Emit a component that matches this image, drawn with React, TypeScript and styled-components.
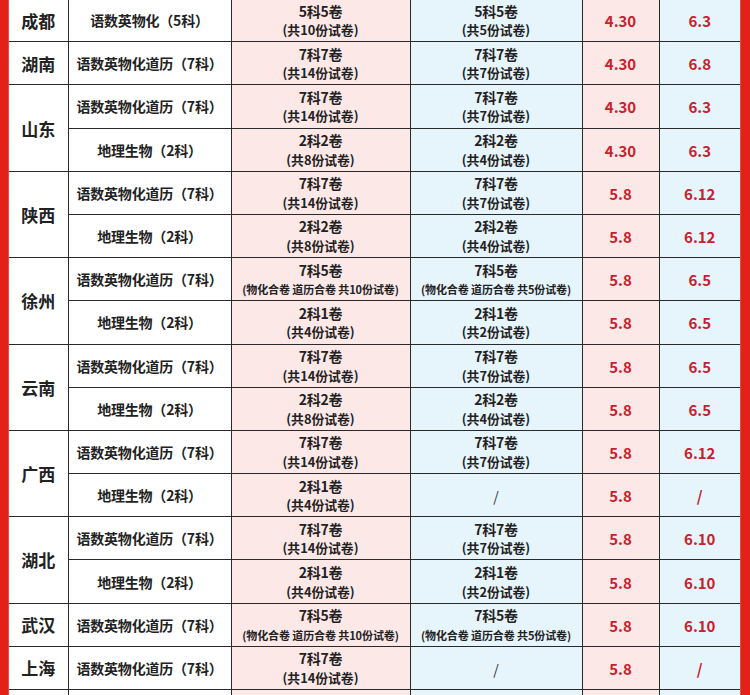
import React from "react";
import styled, { createGlobalStyle } from "styled-components";

const Global = createGlobalStyle`
  html, body { margin: 0; padding: 0; background: #ffffff; overflow: hidden; }
  body { font-family: "Noto Sans CJK SC", "Noto Sans", sans-serif; }
`;

const Frame = styled.div`
  width: 750px;
  height: 695px;
  overflow: hidden;
  box-sizing: border-box;
  background: #e32119;
  padding: 0 10px 0 9px;
  display: flex;
  flex-direction: column;
`;

const Table = styled.table`
  width: 731px;
  table-layout: fixed;
  border-collapse: collapse;
  margin-top: -2px;
  background: #ffffff;
  box-shadow: -1px 0 0 #f04a40, 1px 0 0 #f04a40;
`;

const Row = styled.tr`
  height: 43.2px;
`;

type Tone = "white" | "pink" | "blue";
const bg: Record<Tone, string> = {
  white: "#ffffff",
  pink: "#fde8e8",
  blue: "#e6f4fc",
};

const Cell = styled.td<{ $tone?: Tone }>`
  border: 1.8px solid #2a2a2a;
  padding: 0;
  text-align: center;
  vertical-align: middle;
  background: ${(p) => bg[p.$tone || "white"]};
  color: #222;
  font-weight: 700;
  &:first-child { border-left: none; }
  &:last-child { border-right: none; }
`;

const City = styled.span`
  font-size: 17px;
  display: block;
`;

const Subject = styled.span`
  font-size: 14px;
  display: block;
  letter-spacing: -0.2px;
`;

const Main = styled.div`
  font-size: 14px;
  line-height: 20.6px;
  letter-spacing: -0.2px;
`;

const Sub = styled.div<{ $small?: boolean }>`
  font-size: ${(p) => (p.$small ? "11px" : "12.8px")};
  line-height: 18.6px;
  letter-spacing: ${(p) => (p.$small ? "-0.1px" : "0px")};
`;

const Num = styled.span`
  font-size: 15px;
  color: #c8202c;
  font-weight: 700;
`;

const Slash = styled.span`
  font-size: 14px;
  font-weight: 400;
  color: #333;
`;

type Paper = { main: string; sub: string; small?: boolean } | null;

type Line = {
  city?: string;
  span?: number;
  subject: string;
  a: Paper;
  b: Paper;
  d1: string;
  d2: string;
};

const S7 = "语数英物化道历（7科）";
const S2 = "地理生物（2科）";

const lines: Line[] = [
  { city: "成都", subject: "语数英物化（5科）", a: { main: "5科5卷", sub: "(共10份试卷)" }, b: { main: "5科5卷", sub: "(共5份试卷)" }, d1: "4.30", d2: "6.3" },
  { city: "湖南", subject: S7, a: { main: "7科7卷", sub: "(共14份试卷)" }, b: { main: "7科7卷", sub: "(共7份试卷)" }, d1: "4.30", d2: "6.8" },
  { city: "山东", span: 2, subject: S7, a: { main: "7科7卷", sub: "(共14份试卷)" }, b: { main: "7科7卷", sub: "(共7份试卷)" }, d1: "4.30", d2: "6.3" },
  { subject: S2, a: { main: "2科2卷", sub: "(共8份试卷)" }, b: { main: "2科2卷", sub: "(共4份试卷)" }, d1: "4.30", d2: "6.3" },
  { city: "陕西", span: 2, subject: S7, a: { main: "7科7卷", sub: "(共14份试卷)" }, b: { main: "7科7卷", sub: "(共7份试卷)" }, d1: "5.8", d2: "6.12" },
  { subject: S2, a: { main: "2科2卷", sub: "(共8份试卷)" }, b: { main: "2科2卷", sub: "(共4份试卷)" }, d1: "5.8", d2: "6.12" },
  { city: "徐州", span: 2, subject: S7, a: { main: "7科5卷", sub: "(物化合卷 道历合卷 共10份试卷)", small: true }, b: { main: "7科5卷", sub: "(物化合卷 道历合卷 共5份试卷)", small: true }, d1: "5.8", d2: "6.5" },
  { subject: S2, a: { main: "2科1卷", sub: "(共4份试卷)" }, b: { main: "2科1卷", sub: "(共2份试卷)" }, d1: "5.8", d2: "6.5" },
  { city: "云南", span: 2, subject: S7, a: { main: "7科7卷", sub: "(共14份试卷)" }, b: { main: "7科7卷", sub: "(共7份试卷)" }, d1: "5.8", d2: "6.5" },
  { subject: S2, a: { main: "2科2卷", sub: "(共8份试卷)" }, b: { main: "2科2卷", sub: "(共4份试卷)" }, d1: "5.8", d2: "6.5" },
  { city: "广西", span: 2, subject: S7, a: { main: "7科7卷", sub: "(共14份试卷)" }, b: { main: "7科7卷", sub: "(共7份试卷)" }, d1: "5.8", d2: "6.12" },
  { subject: S2, a: { main: "2科1卷", sub: "(共4份试卷)" }, b: null, d1: "5.8", d2: "/" },
  { city: "湖北", span: 2, subject: S7, a: { main: "7科7卷", sub: "(共14份试卷)" }, b: { main: "7科7卷", sub: "(共7份试卷)" }, d1: "5.8", d2: "6.10" },
  { subject: S2, a: { main: "2科1卷", sub: "(共4份试卷)" }, b: { main: "2科1卷", sub: "(共2份试卷)" }, d1: "5.8", d2: "6.10" },
  { city: "武汉", subject: S7, a: { main: "7科5卷", sub: "(物化合卷 道历合卷 共10份试卷)", small: true }, b: { main: "7科5卷", sub: "(物化合卷 道历合卷 共5份试卷)", small: true }, d1: "5.8", d2: "6.10" },
  { city: "上海", subject: S7, a: { main: "7科7卷", sub: "(共14份试卷)" }, b: null, d1: "5.8", d2: "/" },
];

const PaperCell: React.FC<{ p: Paper; tone: Tone }> = ({ p, tone }) => (
  <Cell $tone={tone}>
    {p ? (
      <>
        <Main>{p.main}</Main>
        <Sub $small={p.small}>{p.sub}</Sub>
      </>
    ) : (
      <Slash>/</Slash>
    )}
  </Cell>
);

export default function App() {
  let covered = 0;
  return (
    <>
      <Global />
      <Frame>
        <Table>
          <colgroup>
            <col style={{ width: 59 }} />
            <col style={{ width: 163 }} />
            <col style={{ width: 179 }} />
            <col style={{ width: 172 }} />
            <col style={{ width: 77 }} />
            <col style={{ width: 81 }} />
          </colgroup>
          <tbody>
            {lines.map((l, i) => {
              const showCity = covered === 0;
              if (showCity) covered = (l.span || 1) - 1;
              else covered -= 1;
              return (
                <Row key={i}>
                  {showCity && (
                    <Cell rowSpan={l.span || 1}>
                      <City>{l.city}</City>
                    </Cell>
                  )}
                  <Cell>
                    <Subject>{l.subject}</Subject>
                  </Cell>
                  <PaperCell p={l.a} tone="pink" />
                  <PaperCell p={l.b} tone="blue" />
                  <Cell $tone="pink">
                    <Num>{l.d1}</Num>
                  </Cell>
                  <Cell $tone="blue">
                    <Num>{l.d2}</Num>
                  </Cell>
                </Row>
              );
            })}
            <Row>
              <Cell />
              <Cell />
              <Cell $tone="pink" />
              <Cell $tone="blue" />
              <Cell $tone="pink" />
              <Cell $tone="blue" />
            </Row>
          </tbody>
        </Table>
      </Frame>
    </>
  );
}
